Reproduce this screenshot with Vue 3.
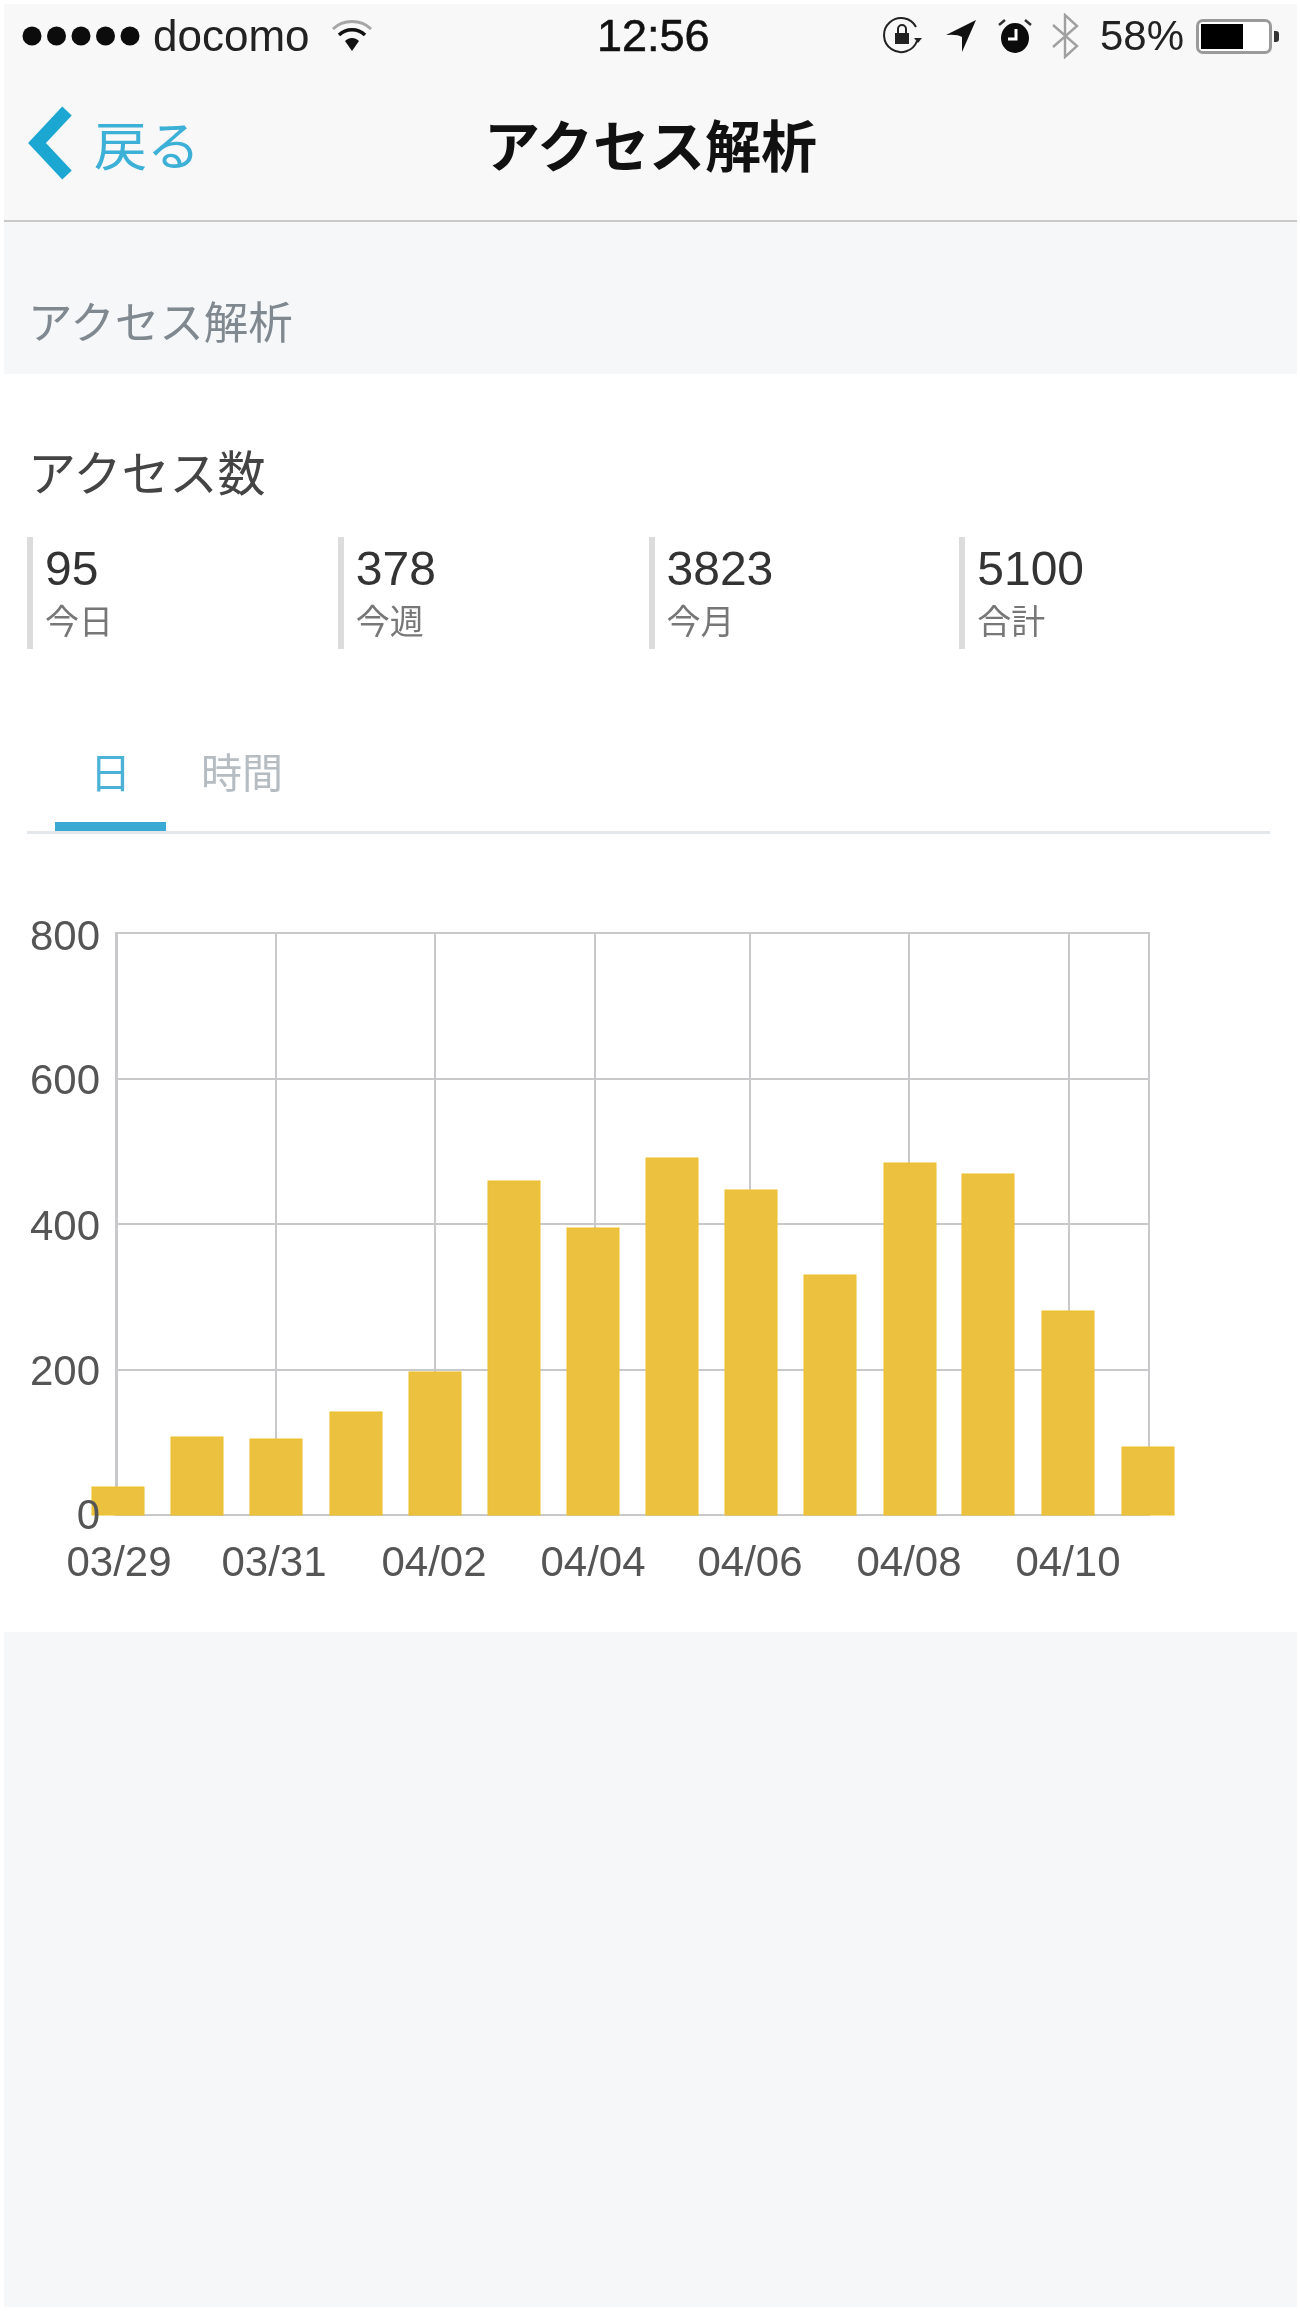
<template>
  <div class="screen">
    <header class="top">
      <div class="status">
        <div class="status-left">
          <svg class="signal" width="122" height="24" viewBox="0 0 122 24">
            <circle v-for="i in 5" :key="i" :cx="10 + (i - 1) * 24.5" cy="12" r="9.5" fill="#0c0c0c" />
          </svg>
          <span class="carrier">docomo</span>
          <svg class="wifi" width="42" height="34" viewBox="0 0 42 34" fill="none">
            <path d="M2 10 C12 0 30 0 40 10" stroke="#a6a6a6" stroke-width="3" />
            <path d="M8 16 C15 9 27 9 34 16" stroke="#111" stroke-width="3.4" />
            <path d="M14 22 C18 18 24 18 28 22 L21 32 Z" fill="#111" />
          </svg>
        </div>
        <span class="clock">12:56</span>
        <div class="status-right">
          <svg width="40" height="38" viewBox="0 0 40 38" fill="none">
            <path d="M34 24 A17 17 0 1 1 33 10" stroke="#222" stroke-width="2" />
            <path d="M31 21 L39 21 L35 26 Z" fill="#222" />
            <rect x="12" y="16" width="14" height="11" fill="#222" />
            <path d="M15 16 V12 a4 4 0 0 1 8 0 V16" stroke="#222" stroke-width="2" />
          </svg>
          <svg class="arrow" width="32" height="34" viewBox="0 0 32 34">
            <path d="M31 1 L1 16 Q12 15 17 18 Q17 26 17 33 Z" fill="#111" />
          </svg>
          <svg class="alarm" width="36" height="34" viewBox="0 0 36 34" fill="none">
            <ellipse cx="18" cy="19" rx="14" ry="15" fill="#0c0c0c" />
            <path d="M2 6 L8 1 M34 6 L28 1" stroke="#333" stroke-width="2.5" />
            <path d="M19 10 V20 H11" stroke="#fff" stroke-width="3" />
          </svg>
          <svg class="bt" width="28" height="46" viewBox="0 0 28 46" fill="none">
            <path d="M2 12 L26 33 L14 44 V2 L26 13 L2 34" stroke="#a0a0a0" stroke-width="2.4" />
          </svg>
          <span class="battery-text">58%</span>
          <div class="battery">
            <div class="battery-fill"></div>
          </div>
          <div class="battery-nub"></div>
        </div>
      </div>
      <div class="nav">
        <div class="back">
          <svg width="46" height="74" viewBox="0 0 46 74" fill="none">
            <path d="M39 5 L9 37 L39 69" stroke="#1ca7d3" stroke-width="13" />
          </svg>
          <span>戻る</span>
        </div>
        <h1>アクセス解析</h1>
      </div>
    </header>

    <h2 class="section">アクセス解析</h2>

    <section class="card">
      <h3>アクセス数</h3>
      <div class="stats">
        <div v-for="s in stats" :key="s.label" class="stat">
          <div class="num">{{ s.value }}</div>
          <div class="lbl">{{ s.label }}</div>
        </div>
      </div>

      <div class="tabs">
        <div class="tab active">日</div>
        <div class="tab">時間</div>
      </div>

      <svg class="chart" width="1293" height="695" viewBox="0 900 1293 695">
        <g stroke="#c9c9cc" stroke-width="2" fill="none">
          <line v-for="y in gridY" :key="'h' + y" x1="112" x2="1145" :y1="y" :y2="y" />
          <line v-for="t in ticks" :key="'v' + t.x" :x1="t.x" :x2="t.x" y1="930" y2="1512" />
          <rect x="112" y="930" width="1033" height="582" />
        </g>
        <g class="bars">
          <rect
            v-for="b in bars"
            :key="b.x"
            :x="b.x"
            :y="b.top"
            width="52"
            :height="1512 - b.top"
          />
        </g>
        <g class="axis">
          <text v-for="l in yLabels" :key="l.text" x="96" :y="l.y" text-anchor="end">{{ l.text }}</text>
          <text v-for="t in ticks" :key="t.label" :x="t.labelX" y="1573" text-anchor="middle">{{ t.label }}</text>
        </g>
      </svg>
    </section>
  </div>
</template>

<script setup>
const stats = [
  { value: '95', label: '今日' },
  { value: '378', label: '今週' },
  { value: '3823', label: '今月' },
  { value: '5100', label: '合計' }
]

const gridY = [930, 1076, 1221, 1367, 1512]

const yLabels = [
  { text: '800', y: 933 + 14 },
  { text: '600', y: 1077 + 14 },
  { text: '400', y: 1223 + 14 },
  { text: '200', y: 1368 + 14 },
  { text: '0', y: 1512 + 14 }
]

const ticks = [
  { x: 113, labelX: 115, label: '03/29' },
  { x: 272, labelX: 270, label: '03/31' },
  { x: 431, labelX: 430, label: '04/02' },
  { x: 591, labelX: 589, label: '04/04' },
  { x: 746, labelX: 746, label: '04/06' },
  { x: 905, labelX: 905, label: '04/08' },
  { x: 1065, labelX: 1064, label: '04/10' }
]

const tops = [1484, 1434, 1436, 1409, 1369, 1178, 1225, 1155, 1187, 1272, 1160, 1171, 1308, 1444]
const lefts = [88, 167, 246, 326, 405, 484, 563, 642, 721, 800, 880, 958, 1038, 1118]
const bars = lefts.map((x, i) => ({ x, top: tops[i] }))
</script>

<style>
html,
body {
  margin: 0;
  background: #fff;
}
</style>

<style scoped>
.screen {
  width: 1293px;
  height: 2303px;
  margin: 4px 3px 4px 4px;
  background: #f6f7f9;
  font-family: "Liberation Sans", "Noto Sans CJK JP", sans-serif;
  display: flex;
  flex-direction: column;
  filter: blur(0.6px);
}

.top {
  height: 218px;
  background: #f8f8f8;
  border-bottom: 2px solid #c9c9c9;
  box-sizing: border-box;
}

.status {
  display: flex;
  align-items: center;
  justify-content: space-between;
  height: 62px;
  padding: 2px 18px 0 18px;
  box-sizing: border-box;
  position: relative;
  color: #222;
}

.status-left,
.status-right {
  display: flex;
  align-items: center;
}

.signal {
  margin-right: 9px;
}

.carrier {
  font-size: 44px;
  margin-right: 21px;
}

.clock {
  position: absolute;
  left: 593px;
  font-size: 45px;
  color: #111;
  -webkit-text-stroke: 0.6px #111;
}

.arrow {
  margin-left: 22px;
}

.alarm {
  margin-left: 20px;
}

.bt {
  margin-left: 18px;
}

.battery-text {
  font-size: 42px;
  margin-left: 21px;
  margin-right: 12px;
}

.battery {
  width: 76px;
  height: 35px;
  box-sizing: border-box;
  border: 3px solid #9a9a9a;
  border-radius: 7px;
  padding: 2px;
  background: #fff;
}

.battery-fill {
  width: 42px;
  height: 100%;
  background: #000;
}

.battery-nub {
  width: 5px;
  height: 11px;
  margin-left: 2px;
  background: #333;
  border-radius: 0 3px 3px 0;
}

.nav {
  position: relative;
  display: flex;
  align-items: center;
  justify-content: center;
  height: 154px;
}

.back {
  position: absolute;
  left: 24px;
  top: 0;
  bottom: 0;
  display: flex;
  align-items: center;
  gap: 20px;
  font-size: 53px;
  color: #3cb0d6;
}

h1 {
  margin: 0 0 2px;
  font-size: 56px;
  font-weight: 700;
  color: #111;
}

.section {
  margin: 0;
  height: 152px;
  box-sizing: border-box;
  padding: 76px 0 0 24px;
  font-size: 44.5px;
  line-height: 52px;
  font-weight: 400;
  color: #808890;
}

.card {
  background: #fff;
  height: 1258px;
}

h3 {
  margin: 0;
  padding: 73px 0 0 24px;
  font-size: 48px;
  line-height: 56px;
  font-weight: 400;
  color: #444;
}

.stats {
  display: grid;
  grid-template-columns: repeat(4, 1fr);
  width: 1243px;
  margin: 34px 0 0 23px;
}

.stat {
  height: 112px;
  border-left: 6px solid #dcdcdc;
  box-sizing: border-box;
  padding: 2px 0 0 12px;
}

.num {
  font-size: 48px;
  line-height: 60px;
  color: #333;
}

.lbl {
  font-size: 34px;
  line-height: 47px;
  color: #777;
}

.tabs {
  display: flex;
  width: 1243px;
  box-sizing: border-box;
  margin: 76px 0 0 23px;
  padding-left: 28px;
  border-bottom: 3px solid #e4e8ec;
  height: 109px;
}

.tab {
  padding: 0 35px;
  font-size: 41px;
  line-height: 99px;
  height: 106px;
  box-sizing: border-box;
  color: #b5bcc2;
}

.tab.active {
  color: #4db2d8;
  border-bottom: 9px solid #3aa9d3;
}

.chart {
  display: block;
  margin-top: 69px;
}

.bars rect {
  fill: #ebc13f;
  stroke: #ecc02c;
  stroke-width: 1;
}

.axis text {
  font-family: "Liberation Sans", sans-serif;
  font-size: 42px;
  fill: #555;
}
</style>
